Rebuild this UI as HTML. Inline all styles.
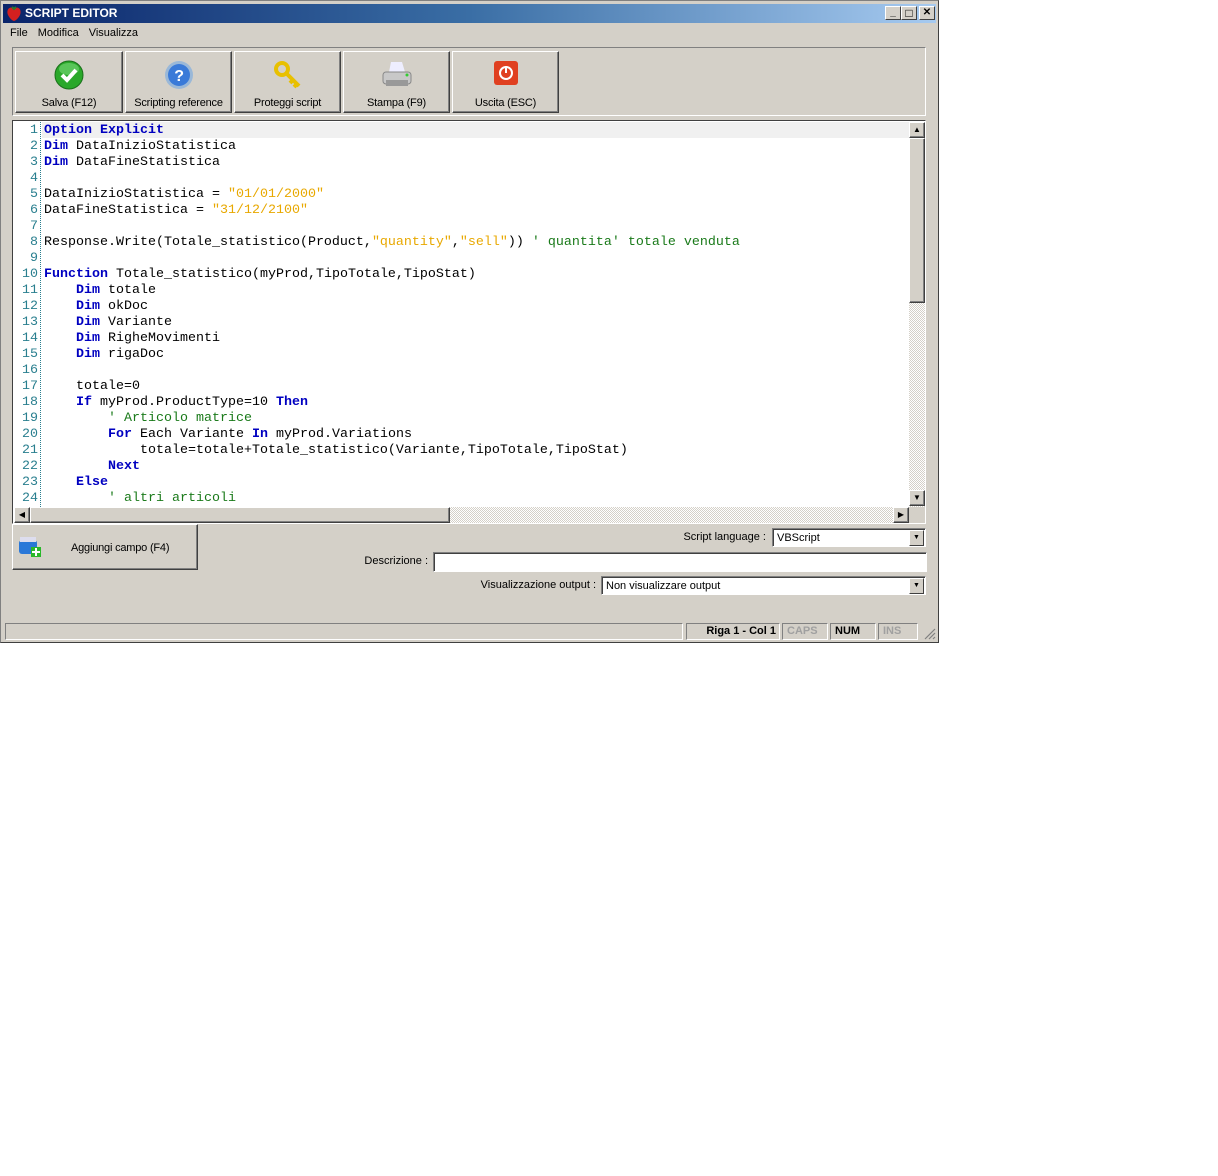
<!DOCTYPE html>
<html><head><meta charset="utf-8">
<style>
*{box-sizing:border-box;margin:0;padding:0}
body{width:1218px;height:1176px;background:#fff;position:relative;overflow:hidden;font-family:"Liberation Sans",Arial,sans-serif;font-size:11px;color:#000}
.abs{position:absolute}
#win{left:0;top:0;width:939px;height:643px;background:#d4d0c8;border:1px solid #808080;border-right-color:#404040;border-bottom-color:#404040}
#title{left:2px;top:3px;width:933px;height:19px;background:linear-gradient(to right,#0a246a,#3a6ea5 50%,#a6caf0);color:#fff;font-weight:bold;font-size:12px;line-height:19px;padding-left:22px}
.tb{top:5px;width:16px;height:14px;background:#d4d0c8;border:1px solid;border-color:#fff #404040 #404040 #fff;font-size:10px;line-height:12px;text-align:center;color:#000;font-weight:bold}
.menu span{margin-right:10px}
.raised{border:1px solid;border-color:#fff #404040 #404040 #fff;box-shadow:inset -1px -1px 0 #808080}
.sunk{border:1px solid;border-color:#808080 #fff #fff #808080;box-shadow:inset 1px 1px 0 #404040}
.btn{top:50px;height:62px;text-align:center;font-size:11px;letter-spacing:-0.2px}
.btn .lbl{position:absolute;left:0;right:0;top:45px}
.btn .ic{position:absolute;left:50%;top:8px;transform:translateX(-50%)}
#code{left:43px;top:122px;font-family:"Liberation Mono",monospace;font-size:13.33px;line-height:16px;white-space:pre;color:#000}
#nums{left:14px;top:122px;width:23px;text-align:right;font-family:"Liberation Mono",monospace;font-size:13.33px;line-height:16px;color:#2a7f8f;white-space:pre}
.k{color:#0000c0;font-weight:bold}
.s{color:#e8a800}
.c{color:#1a7a1a}
.sb{background:#d4d0c8;border:1px solid;border-color:#fff #404040 #404040 #fff;box-shadow:inset -1px -1px 0 #808080}
.hatch{background:repeating-conic-gradient(#d4d0c8 0 25%,#fff 0 50%) 0 0/2px 2px}
.lab{font-size:11px;text-align:right}
.combo{background:#fff}
.cbtn{position:absolute;right:1px;top:1px;width:15px;height:16px;background:#d4d0c8;border:1px solid;border-color:#fff #404040 #404040 #fff;font-size:7px;line-height:14px;text-align:center}
.pane{top:622px;height:17px;border:1px solid;border-color:#808080 #fff #fff #808080;font-weight:bold;font-size:11px;line-height:15px;padding-left:4px}
</style></head><body>
<div id="win" class="abs">
<div id="title" class="abs">SCRIPT EDITOR</div>
<svg class="abs" style="left:5px;top:4px" width="16" height="17" viewBox="0 0 16 17"><path d="M8 3 C3 1 0 5 2 10 C4 14 7 16 8 16 C9 16 12 14 14 10 C16 5 13 1 8 3Z" fill="#d42020"/><path d="M6 2 L8 4 L10 2" stroke="#2a7a2a" stroke-width="2" fill="none"/></svg>
<div class="abs tb" style="left:884px">_</div>
<div class="abs tb" style="left:900px;font-size:12px">□</div>
<div class="abs tb" style="left:918px">✕</div>
<div class="abs menu" style="left:9px;top:26px;font-size:11px"><span>File</span><span>Modifica</span><span>Visualizza</span></div>
<div class="abs" style="left:11px;top:46px;width:914px;height:69px;border:1px solid;border-color:#808080 #fff #fff #808080"></div>
<div class="abs btn raised" style="left:14px;width:108px"><svg class="ic" width="30" height="30"><circle cx="15" cy="15" r="14" fill="#2aa82a" stroke="#1a701a"/><ellipse cx="15" cy="9" rx="10" ry="6" fill="#7ad87a" opacity=".6"/><path d="M8 15 L13 20 L22 10" stroke="#fff" stroke-width="4" fill="none"/></svg><div class="lbl">Salva (F12)</div></div>
<div class="abs btn raised" style="left:124px;width:107px"><svg class="ic" width="30" height="30"><circle cx="15" cy="15" r="14" fill="#9ab8d8"/><circle cx="15" cy="15" r="11" fill="#3a7ad8"/><text x="15" y="21" font-size="16" font-weight="bold" fill="#fff" text-anchor="middle" font-family="Liberation Sans">?</text></svg><div class="lbl">Scripting reference</div></div>
<div class="abs btn raised" style="left:233px;width:107px"><svg class="ic" width="30" height="30"><circle cx="9" cy="9" r="6" fill="none" stroke="#e8c000" stroke-width="4"/><path d="M13 13 L26 26 M20 20 L17 23 M24 24 L21 27" stroke="#e8c000" stroke-width="4"/></svg><div class="lbl">Proteggi script</div></div>
<div class="abs btn raised" style="left:342px;width:107px"><svg class="ic" width="34" height="30"><path d="M11 2 L22 2 L25 12 L9 12Z" fill="#eef"/><rect x="3" y="12" width="28" height="12" rx="3" fill="#c8c8c8" stroke="#888"/><rect x="6" y="20" width="22" height="6" fill="#999"/><circle cx="27" cy="15" r="1.5" fill="#3c3"/></svg><div class="lbl">Stampa (F9)</div></div>
<div class="abs btn raised" style="left:451px;width:107px"><svg class="ic" width="26" height="26"><rect x="1" y="1" width="24" height="24" rx="3" fill="#e04020"/><circle cx="13" cy="13" r="6" fill="none" stroke="#fff" stroke-width="2"/><path d="M13 6 V13" stroke="#fff" stroke-width="2"/></svg><div class="lbl">Uscita (ESC)</div></div>

<div class="abs" style="left:11px;top:119px;width:914px;height:404px;border:1px solid;border-color:#404040 #fff #fff #404040;background:#fff"></div>
<div class="abs" style="left:41px;top:121px;width:867px;height:16px;background:#f0f0f0"></div>
<div class="abs" style="left:39px;top:121px;height:385px;border-left:1px dotted #2a7f8f"></div>
<div id="nums" class="abs">1
2
3
4
5
6
7
8
9
10
11
12
13
14
15
16
17
18
19
20
21
22
23
24</div>
<div id="code" class="abs"><span class="k">Option Explicit</span>
<span class="k">Dim</span> DataInizioStatistica
<span class="k">Dim</span> DataFineStatistica

DataInizioStatistica = <span class="s">"01/01/2000"</span>
DataFineStatistica = <span class="s">"31/12/2100"</span>

Response.Write(Totale_statistico(Product,<span class="s">"quantity"</span>,<span class="s">"sell"</span>)) <span class="c">' quantita' totale venduta</span>

<span class="k">Function</span> Totale_statistico(myProd,TipoTotale,TipoStat)
    <span class="k">Dim</span> totale
    <span class="k">Dim</span> okDoc
    <span class="k">Dim</span> Variante
    <span class="k">Dim</span> RigheMovimenti
    <span class="k">Dim</span> rigaDoc

    totale=0
    <span class="k">If</span> myProd.ProductType=10 <span class="k">Then</span>
        <span class="c">' Articolo matrice</span>
        <span class="k">For</span> Each Variante <span class="k">In</span> myProd.Variations
            totale=totale+Totale_statistico(Variante,TipoTotale,TipoStat)
        <span class="k">Next</span>
    <span class="k">Else</span>
        <span class="c">' altri articoli</span></div>
<div class="abs" style="left:13px;top:506px;width:910px;height:16px;background:#fff"></div>
<div class="abs hatch" style="left:908px;top:121px;width:16px;height:385px"></div>
<div class="abs sb" style="left:908px;top:121px;width:16px;height:16px;font-size:8px;text-align:center;line-height:14px">▲</div>
<div class="abs sb" style="left:908px;top:137px;width:16px;height:165px"></div>
<div class="abs sb" style="left:908px;top:489px;width:16px;height:16px;font-size:8px;text-align:center;line-height:14px">▼</div>
<div class="abs hatch" style="left:13px;top:506px;width:895px;height:16px"></div>
<div class="abs sb" style="left:13px;top:506px;width:16px;height:16px;font-size:8px;text-align:center;line-height:14px">◀</div>
<div class="abs sb" style="left:29px;top:506px;width:420px;height:16px"></div>
<div class="abs sb" style="left:892px;top:506px;width:16px;height:16px;font-size:8px;text-align:center;line-height:14px">▶</div>
<div class="abs" style="left:908px;top:506px;width:16px;height:16px;background:#d4d0c8"></div>

<div class="abs raised" style="left:11px;top:523px;width:186px;height:46px"><svg class="abs" style="left:4px;top:9px" width="26" height="26"><rect x="2" y="6" width="18" height="14" rx="3" fill="#2a78d8"/><rect x="3" y="3" width="16" height="5" fill="#dde"/><rect x="14" y="13" width="10" height="10" fill="#2ab82a"/><path d="M19 14 V22 M15 18 H23" stroke="#fff" stroke-width="2"/></svg><div class="abs" style="left:58px;top:17px;letter-spacing:-0.2px">Aggiungi campo (F4)</div></div>
<div class="abs lab" style="left:600px;top:530px;width:165px">Script language :</div>
<div class="abs sunk combo" style="left:771px;top:527px;width:154px;height:19px"><span style="position:absolute;left:4px;top:3px">VBScript</span><div class="cbtn">▼</div></div>
<div class="abs lab" style="left:300px;top:554px;width:127px">Descrizione :</div>
<div class="abs sunk" style="left:432px;top:551px;width:494px;height:20px;background:#fff"></div>
<div class="abs lab" style="left:420px;top:578px;width:175px">Visualizzazione output :</div>
<div class="abs sunk combo" style="left:600px;top:575px;width:325px;height:19px"><span style="position:absolute;left:4px;top:3px">Non visualizzare output</span><div class="cbtn">▼</div></div>

<div class="abs pane" style="left:4px;width:678px"></div>
<div class="abs pane" style="left:685px;width:94px;text-align:right;padding-right:3px">Riga 1 - Col 1</div>
<div class="abs pane" style="left:781px;width:46px;color:#a0a0a0">CAPS</div>
<div class="abs pane" style="left:829px;width:46px">NUM</div>
<div class="abs pane" style="left:877px;width:40px;color:#a0a0a0">INS</div>
<svg class="abs" style="left:922px;top:626px" width="13" height="13"><path d="M12 2 L2 12 M12 6 L6 12 M12 10 L10 12" stroke="#808080" stroke-width="1.2"/></svg>
</div>
</body></html>
